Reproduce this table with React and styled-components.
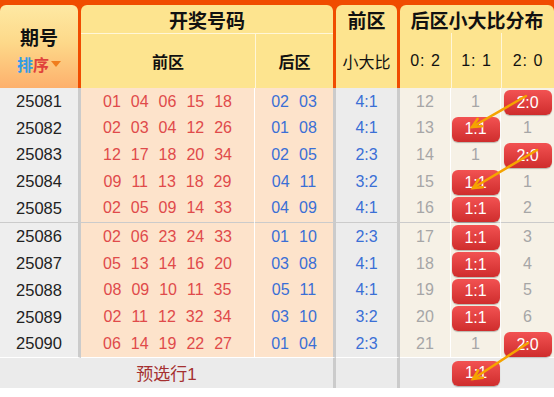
import React from "react";
import styled, { createGlobalStyle } from "styled-components";

const GlobalStyle = createGlobalStyle`
  body {
    margin: 0;
    background: #fff;
    font-family: "Liberation Sans", "Noto Sans CJK SC", sans-serif;
  }
`;

const COLS = "81px 174px 81px 64px 51px 50px 53px";
const ORANGE = "#f04c00";
const ROW_H = 26.7;

const Table = styled.div`
  position: relative;
  width: 554px;
`;

const Head = styled.div`
  display: grid;
  grid-template-columns: ${COLS};
  grid-template-rows: 28px 55px;
  padding-top: 5px;
  background: ${ORANGE};
  color: #111;
`;

const HeadCell = styled.div`
  display: flex;
  align-items: center;
  justify-content: center;
  background: ${(p) => p.$bg || "#fde48f"};
  margin-right: ${(p) => (p.$gap ? "3px" : "0")};
  border-radius: ${(p) => (p.$round ? "6px 6px 0 0" : "0")};
  border-left: ${(p) => (p.$line ? "1px solid #fff6d8" : "none")};
  border-top: ${(p) => (p.$top ? "1px solid #fff6d8" : "none")};
  font-size: ${(p) => p.$size || 16}px;
  font-weight: ${(p) => (p.$bold ? 700 : 400)};
  letter-spacing: ${(p) => (p.$spaced ? "1px" : "0")};
  white-space: nowrap;
`;

const IssueHead = styled(HeadCell)`
  grid-row: 1 / 3;
  flex-direction: column;
  gap: 2px;
  background: linear-gradient(#fee9a3 0%, #fdd98a 45%, #fdb06c 100%);
  padding-top: 6px;
`;

const IssueTitle = styled.div`
  font-size: 19px;
  font-weight: 700;
`;

const Sort = styled.div`
  font-size: 16px;
  font-weight: 700;
  display: flex;
  align-items: center;
`;

const SortA = styled.span`
  color: #2e9be6;
`;
const SortB = styled.span`
  color: #e0413b;
`;
const Caret = styled.span`
  width: 0;
  height: 0;
  margin-left: 2px;
  border-left: 5px solid transparent;
  border-right: 5px solid transparent;
  border-top: 6px solid #f07d1e;
`;

const Row = styled.div`
  display: grid;
  grid-template-columns: ${COLS};
  height: ${(p) => (p.$sep ? ROW_H + 2 : ROW_H)}px;
`;

const Cell = styled.div`
  position: relative;
  box-sizing: border-box;
  display: flex;
  align-items: center;
  justify-content: center;
  background: ${(p) => p.$bg};
  color: ${(p) => p.$color || "#222"};
  font-size: ${(p) => p.$size || 16}px;
  border-right: ${(p) => p.$edge || "none"};
  border-bottom: ${(p) => (p.$sep ? "3px solid #cbcbcb" : "1px solid #fff")};
`;

const Nums = styled.div`
  display: flex;
  gap: 10px;
`;

const Pill = styled.div`
  position: relative;
  z-index: 1;
  align-self: flex-start;
  margin-top: 2px;
  width: 48px;
  height: 25px;
  flex-shrink: 0;
  border-radius: 6px;
  background: linear-gradient(#f25252, #cf2d2d);
  box-shadow: 0 1px 1px rgba(0, 0, 0, 0.25);
  color: #fff;
  font-size: 16px;
  display: flex;
  align-items: center;
  justify-content: center;
`;

const Foot = styled.div`
  display: grid;
  grid-template-columns: 336px 64px 51px 50px 53px;
  height: 31px;
  background: #ebebeb;
`;

const FootCell = styled.div`
  box-sizing: border-box;
  display: flex;
  align-items: center;
  justify-content: center;
  border-right: ${(p) => p.$edge || "none"};
  color: #a53030;
  font-size: 17px;
`;

const Arrows = styled.svg`
  position: absolute;
  left: 0;
  top: 0;
  z-index: 2;
  pointer-events: none;
`;

const GRAY = "3px solid #cbcbcb";
const WHITE = "1px solid #fff";

const rows = [
  ["25081", "01 04 06 15 18", "02 03", "4:1", ["12", "1", "2:0"]],
  ["25082", "02 03 04 12 26", "01 08", "4:1", ["13", "1:1", "1"]],
  ["25083", "12 17 18 20 34", "02 05", "2:3", ["14", "1", "2:0"]],
  ["25084", "09 11 13 18 29", "04 11", "3:2", ["15", "1:1", "1"]],
  ["25085", "02 05 09 14 33", "04 09", "4:1", ["16", "1:1", "2"]],
  ["25086", "02 06 23 24 33", "01 10", "2:3", ["17", "1:1", "3"]],
  ["25087", "05 13 14 16 20", "03 08", "4:1", ["18", "1:1", "4"]],
  ["25088", "08 09 10 11 35", "05 11", "4:1", ["19", "1:1", "5"]],
  ["25089", "02 11 12 32 34", "03 10", "3:2", ["20", "1:1", "6"]],
  ["25090", "06 14 19 22 27", "01 04", "2:3", ["21", "1", "2:0"]],
];

const arrows = [
  [526, 96, 472, 127],
  [537, 150, 473, 188],
  [528, 343, 473, 379],
];

const head = (x1, y1, x2, y2) => {
  const a = Math.atan2(y1 - y2, x1 - x2);
  const len = 10;
  const p = (d) =>
    `${x2 + len * Math.cos(a + d)},${y2 + len * Math.sin(a + d)}`;
  return `M${p(0.45)} L${x2},${y2} L${p(-0.45)}`;
};

const Balls = ({ text }) => (
  <Nums>
    {text.split(" ").map((n, i) => (
      <span key={i}>{n}</span>
    ))}
  </Nums>
);

const DistCell = ({ value, edge, sep }) => (
  <Cell $bg="#f6f1e6" $color="#a6a6a6" $size={16} $edge={edge} $sep={sep}>
    {value.includes(":") ? <Pill>{value}</Pill> : value}
  </Cell>
);

export default function App() {
  return (
    <>
      <GlobalStyle />
      <Table>
        <Head>
          <IssueHead $gap $round>
            <IssueTitle>期号</IssueTitle>
            <Sort>
              <SortA>排</SortA>
              <SortB>序</SortB>
              <Caret />
            </Sort>
          </IssueHead>
          <HeadCell $round $bold $size={19} style={{ gridColumn: "2 / 4" }} $gap>
            开奖号码
          </HeadCell>
          <HeadCell $round $bold $size={19} $gap>
            前区
          </HeadCell>
          <HeadCell $round $bold $size={19} style={{ gridColumn: "5 / 8" }}>
            后区小大比分布
          </HeadCell>
          <HeadCell $bold $top>
            前区
          </HeadCell>
          <HeadCell $bold $top $line $gap>
            后区
          </HeadCell>
          <HeadCell $gap>小大比</HeadCell>
          <HeadCell $spaced>0: 2</HeadCell>
          <HeadCell $spaced $line>
            1: 1
          </HeadCell>
          <HeadCell $spaced $line>
            2: 0
          </HeadCell>
        </Head>

        {rows.map(([issue, front, back, ratio, dist], i) => {
          const sep = i === 4;
          return (
            <Row key={issue} $sep={sep}>
              <Cell $bg="#eeeeee" $edge={GRAY} $sep={sep} $size={16.5}>
                {issue}
              </Cell>
              <Cell $bg="#fde3cb" $color="#e04a4a" $edge={WHITE} $sep={sep}>
                <Balls text={front} />
              </Cell>
              <Cell $bg="#fde3cb" $color="#3a6fd6" $edge={GRAY} $sep={sep}>
                <Balls text={back} />
              </Cell>
              <Cell $bg="#ececec" $color="#3a6fd6" $edge={GRAY} $sep={sep}>
                {ratio}
              </Cell>
              <DistCell value={dist[0]} edge={WHITE} sep={sep} />
              <DistCell value={dist[1]} edge={WHITE} sep={sep} />
              <DistCell value={dist[2]} sep={sep} />
            </Row>
          );
        })}

        <Foot>
          <FootCell $edge={GRAY}>预选行1</FootCell>
          <FootCell $edge={GRAY} />
          <FootCell />
          <FootCell>
            <Pill style={{ marginTop: 4 }}>1:1</Pill>
          </FootCell>
          <FootCell />
        </Foot>

        <Arrows width="554" height="397" viewBox="0 0 554 397">
          {arrows.map(([x1, y1, x2, y2], i) => (
            <g key={i} stroke="#f5a400" strokeWidth="2.5" fill="none" strokeLinecap="round">
              <line x1={x1} y1={y1} x2={x2} y2={y2} />
              <path d={head(x1, y1, x2, y2)} />
            </g>
          ))}
        </Arrows>
      </Table>
    </>
  );
}
